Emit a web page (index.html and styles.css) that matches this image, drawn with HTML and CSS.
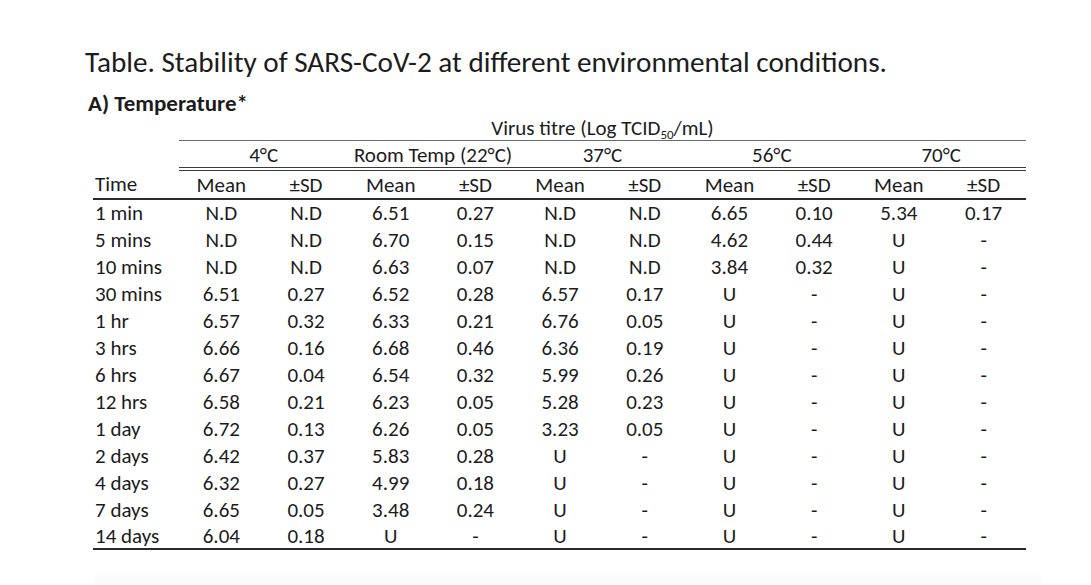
FILE: index.html
```html
<!DOCTYPE html>
<html>
<head>
<meta charset="utf-8">
<link rel="stylesheet" href="styles.css">
</head>
<body>
<div class="page">
  <h1 class="title">Table. Stability of SARS-CoV-2 at different environmental conditions.</h1>
  <h2 class="subtitle">A) Temperature*</h2>
  <table class="data">
    <colgroup>
      <col class="c-time"><col><col><col><col><col><col><col><col><col><col>
    </colgroup>
    <thead>
      <tr class="r-virus">
        <th></th>
        <th colspan="10" class="virus">Virus titre (Log TCID<sub>50</sub>/mL)</th>
      </tr>
      <tr class="r-group">
        <th></th>
        <th colspan="2" class="grp">4°C</th>
        <th colspan="2" class="grp">Room Temp (22°C)</th>
        <th colspan="2" class="grp">37°C</th>
        <th colspan="2" class="grp">56°C</th>
        <th colspan="2" class="grp">70°C</th>
      </tr>
      <tr class="r-head">
        <th class="time">Time</th>
        <th>Mean</th><th>±SD</th>
        <th>Mean</th><th>±SD</th>
        <th>Mean</th><th>±SD</th>
        <th>Mean</th><th>±SD</th>
        <th>Mean</th><th>±SD</th>
      </tr>
    </thead>
    <tbody>
      <tr><td class="time">1 min</td><td>N.D</td><td>N.D</td><td>6.51</td><td>0.27</td><td>N.D</td><td>N.D</td><td>6.65</td><td>0.10</td><td>5.34</td><td>0.17</td></tr>
      <tr><td class="time">5 mins</td><td>N.D</td><td>N.D</td><td>6.70</td><td>0.15</td><td>N.D</td><td>N.D</td><td>4.62</td><td>0.44</td><td>U</td><td>-</td></tr>
      <tr><td class="time">10 mins</td><td>N.D</td><td>N.D</td><td>6.63</td><td>0.07</td><td>N.D</td><td>N.D</td><td>3.84</td><td>0.32</td><td>U</td><td>-</td></tr>
      <tr><td class="time">30 mins</td><td>6.51</td><td>0.27</td><td>6.52</td><td>0.28</td><td>6.57</td><td>0.17</td><td>U</td><td>-</td><td>U</td><td>-</td></tr>
      <tr><td class="time">1 hr</td><td>6.57</td><td>0.32</td><td>6.33</td><td>0.21</td><td>6.76</td><td>0.05</td><td>U</td><td>-</td><td>U</td><td>-</td></tr>
      <tr><td class="time">3 hrs</td><td>6.66</td><td>0.16</td><td>6.68</td><td>0.46</td><td>6.36</td><td>0.19</td><td>U</td><td>-</td><td>U</td><td>-</td></tr>
      <tr><td class="time">6 hrs</td><td>6.67</td><td>0.04</td><td>6.54</td><td>0.32</td><td>5.99</td><td>0.26</td><td>U</td><td>-</td><td>U</td><td>-</td></tr>
      <tr><td class="time">12 hrs</td><td>6.58</td><td>0.21</td><td>6.23</td><td>0.05</td><td>5.28</td><td>0.23</td><td>U</td><td>-</td><td>U</td><td>-</td></tr>
      <tr><td class="time">1 day</td><td>6.72</td><td>0.13</td><td>6.26</td><td>0.05</td><td>3.23</td><td>0.05</td><td>U</td><td>-</td><td>U</td><td>-</td></tr>
      <tr><td class="time">2 days</td><td>6.42</td><td>0.37</td><td>5.83</td><td>0.28</td><td>U</td><td>-</td><td>U</td><td>-</td><td>U</td><td>-</td></tr>
      <tr><td class="time">4 days</td><td>6.32</td><td>0.27</td><td>4.99</td><td>0.18</td><td>U</td><td>-</td><td>U</td><td>-</td><td>U</td><td>-</td></tr>
      <tr><td class="time">7 days</td><td>6.65</td><td>0.05</td><td>3.48</td><td>0.24</td><td>U</td><td>-</td><td>U</td><td>-</td><td>U</td><td>-</td></tr>
      <tr class="last"><td class="time">14 days</td><td>6.04</td><td>0.18</td><td>U</td><td>-</td><td>U</td><td>-</td><td>U</td><td>-</td><td>U</td><td>-</td></tr>
    </tbody>
  </table>
  <div class="shade"></div>
</div>
</body>
</html>
```
FILE: styles.css
```css
html, body {
  margin: 0;
  padding: 0;
  background: #ffffff;
}
body {
  font-family: Carlito, Calibri, Lato, "Open Sans", sans-serif;
  color: #1c1c1c;
}
.page {
  padding: 46px 0 0 85px;
  width: 1006px;
  height: 539px;
  position: relative;
}
.title {
  margin: 0;
  font-weight: normal;
  font-size: 29.2px;
  line-height: 32px;
  white-space: nowrap;
}
.subtitle {
  margin: 11px 0 0 3px;
  font-weight: bold;
  font-size: 23px;
  line-height: 28px;
}
.data {
  margin: 0 0 0 8px;
  border-collapse: collapse;
  table-layout: fixed;
  width: 933px;
  font-size: 21px;
}
.data col {
  width: 84.7px;
}
.data col.c-time {
  width: 86px;
}
.data th,
.data td {
  padding: 0;
  font-weight: normal;
  text-align: center;
  white-space: nowrap;
}
.r-virus th {
  height: 23px;
  line-height: 23px;
}
.virus {
  border-bottom: 1.5px solid #6b6b6b;
}
.virus sub {
  font-size: 13px;
  line-height: 0;
  vertical-align: -4px;
}
.r-group th {
  height: 24px;
  line-height: 24px;
  padding-top: 2px;
}
.grp {
  border-bottom: 4px double #3a3a3a;
}
.r-head th {
  height: 26px;
  line-height: 26px;
  padding-top: 1px;
  border-bottom: 2px solid #2a2a2a;
}
.data td {
  height: 27px;
  line-height: 27px;
}
.data .time {
  text-align: left;
  padding-left: 2px;
}
.data tr.last td {
  height: 24px;
  line-height: 24px;
  vertical-align: top;
  border-bottom: 2px solid #2a2a2a;
}
.shade {
  position: absolute;
  left: 95px;
  right: 50px;
  bottom: 0;
  height: 10px;
  background: #fbfbfb;
}
```
